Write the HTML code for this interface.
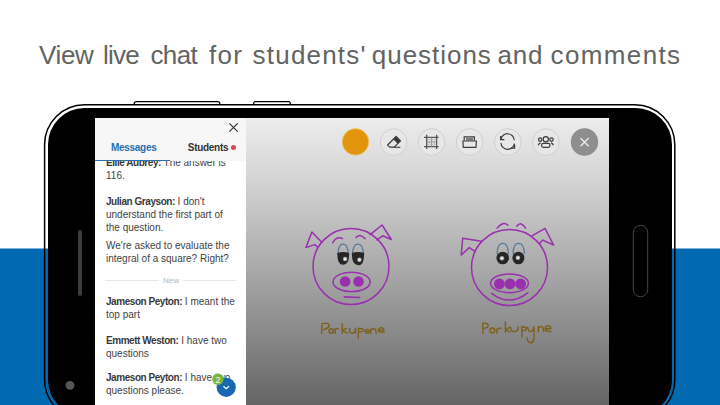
<!DOCTYPE html>
<html><head><meta charset="utf-8">
<style>
*{margin:0;padding:0;box-sizing:border-box}
html,body{width:720px;height:405px;overflow:hidden;background:#fff;font-family:"Liberation Sans",sans-serif}
.abs{position:absolute}
#band{left:0;top:248.5px;width:720px;height:157px;background:#0169b0}
#title{left:0;top:39.6px;width:720px;height:40px;font-size:26px;color:#636363;white-space:nowrap}
#title span{position:absolute;top:0;line-height:normal}
#screen{left:95px;top:118px;width:514px;height:300px;overflow:hidden}
#chat{left:0;top:0;width:151px;height:300px;background:#fff;overflow:hidden}
#hdr{left:0;top:0;width:151px;height:43px;background:#f7f7f7}
#canvas{left:151px;top:0;width:363px;height:300px;background:linear-gradient(#f6f6f6 0px,#ececec 1.5px,#d4d4d4 62px,#9a9a9a 182px,#6c6c6c 272px,#5e5e5e 300px)}
.msg{position:absolute;left:11px;font-size:10px;line-height:13px;color:#434343;white-space:nowrap}
.msg b{color:#3a3a3a;letter-spacing:-0.45px;word-spacing:0}
</style></head><body>
<div id="band" class="abs"></div>
<div id="title" class="abs"><span style="left:39.0px;letter-spacing:-0.37px">View</span><span style="left:103.1px;letter-spacing:-0.83px">live</span><span style="left:150.4px;letter-spacing:-0.57px">chat</span><span style="left:208.9px;letter-spacing:1.30px">for</span><span style="left:252.6px;letter-spacing:1.20px">students'</span><span style="left:371.8px;letter-spacing:0.97px">questions</span><span style="left:497.4px;letter-spacing:0.80px">and</span><span style="left:550.6px;letter-spacing:1.36px">comments</span></div>
<svg class="abs" style="left:0;top:0" width="720" height="405" viewBox="0 0 720 405">
  <rect x="134.2" y="101.7" width="85.6" height="5" rx="2" fill="#fff" stroke="#000" stroke-width="1.2"/>
  <rect x="253.7" y="101.7" width="36.6" height="5" rx="2" fill="#fff" stroke="#000" stroke-width="1.2"/>
  <rect x="44.6" y="104.8" width="630.2" height="315" rx="40" fill="#fff"/>
  <rect x="0" y="248.5" width="720" height="157" fill="#0169b0"/>
  <rect x="44.6" y="104.8" width="630.2" height="315" rx="40" fill="none" stroke="#000" stroke-width="1.5"/>
  <rect x="48" y="108" width="624" height="308.4" rx="36.5" fill="#000"/>
  <rect x="78" y="230" width="4" height="66" rx="2" fill="#3c3c3c"/>
  <rect x="633.3" y="225.3" width="14.4" height="71.4" rx="7.2" fill="none" stroke="#474747" stroke-width="1"/>
  <circle cx="70" cy="385.3" r="4.4" fill="#555"/>
</svg>
<div id="screen" class="abs">
  <div id="canvas" class="abs"><svg class="abs" style="left:0;top:0" width="363" height="300" viewBox="246 118 363 300">
    <g id="toolbar">
      <circle cx="355.5" cy="141.9" r="13.3" fill="#e2950b" stroke="#f0c873" stroke-width="0.8"/>
      <g fill="#e7e7e7" stroke="#cdcdcd" stroke-width="0.9">
        <circle cx="393.6" cy="142" r="13.3"/>
        <circle cx="431.6" cy="142" r="13.3"/>
        <circle cx="469.7" cy="142" r="13.3"/>
        <circle cx="507.8" cy="142" r="13.3"/>
        <circle cx="545.9" cy="142" r="13.3"/>
      </g>
      <circle cx="584.5" cy="142" r="13.7" fill="#8e8e8e"/>
      <path d="M580.5 138 L588.7 146.2 M588.7 138 L580.5 146.2" stroke="#ececec" stroke-width="1.3" fill="none"/>
      <!-- eraser -->
      <path d="M387.6 145 L396.1 136.5 L400.5 140.9 L394.2 147.2 L389.8 147.2 Z" fill="none" stroke="#3a3a3a" stroke-width="1.2" stroke-linejoin="round"/>
      <path d="M393.3 139.3 L396.1 136.5 L400.5 140.9 L397.7 143.7 Z" fill="#3a3a3a"/>
      <path d="M394 147.3 L400.4 147.3" stroke="#3a3a3a" stroke-width="1.1"/>
      <!-- grid -->
      <path d="M426.7 134.8 V148.9 M436.6 134.8 V148.9 M424 137.4 H438.6 M424 146.6 H438.6" stroke="#555" stroke-width="1.3" fill="none"/>
      <path d="M431.6 137.4 V146.6 M426.7 142 H436.6" stroke="#888" stroke-width="0.8" fill="none"/>
      <path d="M429.2 137.4 V146.6 M434.1 137.4 V146.6 M426.7 139.7 H436.6 M426.7 144.3 H436.6" stroke="#9a9a9a" stroke-width="0.7" stroke-dasharray="0.9 0.9" fill="none"/>
      <!-- tray -->
      <path d="M464.2 140.8 V136.8 H474.4 V140.8" fill="none" stroke="#3c3c3c" stroke-width="1.2"/>
      <rect x="466" y="138" width="7" height="2.6" fill="#7a7a7a"/>
      <path d="M462.9 141 H476.4 L476 147.4 H463.3 Z" fill="none" stroke="#3c3c3c" stroke-width="1.2" stroke-linejoin="round"/>
      <!-- sync -->
      <path d="M500.8 139.4 A6.8 6.8 0 0 1 514.3 140.2" fill="none" stroke="#3a3a3a" stroke-width="1.2"/>
      <path d="M500.6 135.9 V139.7 H504.3" fill="none" stroke="#3a3a3a" stroke-width="1.2"/>
      <path d="M514.4 143.6 A6.8 6.8 0 0 1 500.9 143" fill="none" stroke="#3a3a3a" stroke-width="1.2"/>
      <path d="M514.6 144.4 V148.1 H511" fill="none" stroke="#3a3a3a" stroke-width="1.2"/>
      <!-- group -->
      <g fill="none" stroke="#3a3a3a" stroke-width="1.2">
        <circle cx="545.8" cy="139.3" r="2.6"/>
        <circle cx="540.2" cy="139.6" r="1.7"/>
        <circle cx="551.5" cy="139.6" r="1.7"/>
        <rect x="541.6" y="143.3" width="8.4" height="4" rx="1.8"/>
        <path d="M538.2 145.3 Q538.8 143.4 540.6 142.9 M553.4 145.3 Q552.8 143.4 551 142.9"/>
      </g>
    </g>
    <g fill="none" stroke="#7e5f1b" stroke-width="1.4" stroke-linecap="round" stroke-linejoin="round">
      <!-- Porkupene -->
      <path d="M321.6 333.4 L322.2 323.6 Q326 322.3 329 324.4 Q330.3 327.6 323.8 329.6"/>
      <circle cx="331.2" cy="331" r="2.2"/>
      <path d="M335.3 333.3 V328.9 Q336.5 328.2 338.4 328.6"/>
      <path d="M342.2 323.6 V333.3 M346.2 328.3 L342.6 330.5 L347.5 333.1"/>
      <path d="M349.6 328.4 Q349.2 333.6 352.5 333.2 Q355.3 332.6 355.4 328.4 V333.2"/>
      <path d="M358.3 328 V338.3 M358.4 329 Q363.8 327.6 363.4 330.5 Q362.5 332.3 358.6 331.6"/>
      <path d="M365.2 331.4 H369.3 Q369 329.2 367.2 329.4 Q364.9 329.8 365.2 332 Q366 333.7 369.4 333.1"/>
      <path d="M370.8 333.3 V328.9 M370.9 330 Q372.5 328.5 374.5 328.9 Q376 329.5 376.2 333.3"/>
      <path d="M378.3 330.4 H383.8 Q383.8 327.6 381 327.7 Q378 328 378.3 330.8 Q378.9 332.6 384.3 332"/>
      <!-- Porkupyne -->
      <path d="M482.9 333.4 L482.8 323.2 Q487.8 322.6 488.2 325.2 Q488 328 483.6 328.4"/>
      <circle cx="492.4" cy="330.4" r="2.4"/>
      <path d="M496.9 333.2 V329.2 Q498.5 328 501 328.3"/>
      <path d="M505.4 322 V332.2 M509.9 327.2 L505.8 329.8 L510.2 332.1"/>
      <path d="M510.8 327.5 Q511 332 514.3 331.6 Q518.4 331.2 518.3 327"/>
      <path d="M521.8 326.5 V337.1 M521.9 327.3 Q526.4 326.4 526.3 328.8 Q525.9 330.9 522.2 330.6"/>
      <path d="M527.7 327.1 Q528.3 331.8 530.6 331.6 Q533.4 331.2 534 326.7 V339 Q533 343 530.3 342.7 Q527.3 342 527.2 338"/>
      <path d="M538.4 326.4 V331.9 M538.6 328 Q540 326 541.8 326.6 Q543.6 327.6 543.7 331.6"/>
      <path d="M545.3 328.7 H551 Q550.8 325.6 548 325.8 Q545 326.2 545.2 329 Q545.8 331.8 551.2 331.6"/>
    </g>
    <g id="pig1" fill="none" stroke="#9a2fb0" stroke-width="1.5" stroke-linecap="round" stroke-linejoin="round">
      <circle cx="351" cy="266.5" r="38"/>
      <path d="M321.5 242 L311.9 232 L305.9 247.6 L314.8 244.6 L317.8 247.2"/>
      <path d="M370.2 234.7 L382 225 L391.3 239.5 L382.8 235.8 L376.9 239.9"/>
      <path d="M332.7 242.8 Q336.6 235.6 342.5 238.6"/>
      <path d="M356.1 237.6 Q360.4 233.2 365 238.6"/>
      <ellipse cx="351.6" cy="281.9" rx="18.6" ry="9.7"/>
      <path d="M344.3 296.9 L359.7 297.5" stroke-width="1.6"/>
      <circle cx="345.1" cy="281.5" r="5.3" fill="#9a2fb0" stroke="none"/>
      <circle cx="358.5" cy="281.5" r="5.3" fill="#9a2fb0" stroke="none"/>
      <path d="M337.9 254.5 Q338.5 243.5 343 244.2 Q347.8 244 348.4 254.5 M352.5 254.5 Q353 243.5 358 244.2 Q363 244 363.5 254.5" stroke="#54789a" stroke-width="1.25"/>
      <path d="M337.4 253 Q343 251 349.1 253 Q349.5 265 343 264.8 Q337 264.5 337.4 253 Z" fill="#262626" stroke="none"/>
      <path d="M351.9 253 Q358 251 364.1 253 Q364.5 265.3 358 265.3 Q351.5 265 351.9 253 Z" fill="#262626" stroke="none"/>
      <circle cx="345.1" cy="259" r="2.2" fill="#aaa" stroke="none"/><circle cx="345.1" cy="259" r="1.2" fill="#eee" stroke="none"/>
      <circle cx="359.4" cy="259.7" r="2.2" fill="#aaa" stroke="none"/><circle cx="359.4" cy="259.7" r="1.2" fill="#eee" stroke="none"/>
    </g>
    <g id="pig2" fill="none" stroke="#9a2fb0" stroke-width="1.5" stroke-linecap="round" stroke-linejoin="round">
      <circle cx="509.5" cy="267.5" r="38"/>
      <path d="M481.2 241.3 L462.7 238.3 L461.2 255 L469.3 247.6 L475.3 251.6"/>
      <path d="M532.4 235.7 L545 228.3 L553.6 245 L542.8 240.1 L539.9 243.1"/>
      <path d="M497.1 228.1 Q503 220.8 507.8 225.1"/>
      <path d="M516.7 226.3 Q521.2 220.6 525.6 228.1"/>
      <ellipse cx="509.5" cy="283.3" rx="18.9" ry="9.4"/>
      <path d="M491.7 293.3 Q509.4 307 527.8 292.8" stroke-width="1.6"/>
      <circle cx="499.4" cy="283.9" r="5.4" fill="#9a2fb0" stroke="none"/>
      <circle cx="510" cy="283.9" r="5.4" fill="#9a2fb0" stroke="none"/>
      <circle cx="520.6" cy="283.9" r="5.4" fill="#9a2fb0" stroke="none"/>
      <path d="M497.1 253.6 Q497.5 243 503 243.5 Q508 243.3 508.4 253.6 M513.1 253.6 Q513.5 243 518.5 243.5 Q524 243.3 524.4 253.6" stroke="#54789a" stroke-width="1.25"/>
      <ellipse cx="502.7" cy="258" rx="6.3" ry="6.3" fill="#262626" stroke="none"/>
      <ellipse cx="518.4" cy="258" rx="6" ry="6.3" fill="#262626" stroke="none"/>
      <circle cx="501.9" cy="258.3" r="2.3" fill="#aaa" stroke="none"/><circle cx="501.9" cy="258.3" r="1.2" fill="#eee" stroke="none"/>
      <circle cx="517.9" cy="257.7" r="2.3" fill="#aaa" stroke="none"/><circle cx="517.9" cy="257.7" r="1.2" fill="#eee" stroke="none"/>
    </g>
  </svg></div>
  <div id="chat" class="abs">
    <div class="msg" style="top:38px"><b>Ellie Aubrey:</b> The answer is<br>116.</div>
    <div class="msg" style="top:77px"><b>Julian Grayson:</b> I don't<br>understand the first part of<br>the question.</div>
    <div class="msg" style="top:121px">We're asked to evaluate the<br>integral of a square? Right?</div>
    <div class="msg" style="top:177px"><b>Jameson Peyton:</b> I meant the<br>top part</div>
    <div class="msg" style="top:215.6px"><b>Emmett Weston:</b> I have two<br>questions</div>
    <div class="msg" style="top:252.8px"><b>Jameson Peyton:</b> I have two<br>questions please.</div>
    <div id="hdr" class="abs">
      <div class="abs" style="left:16px;top:23px;font-size:10px;font-weight:bold;color:#2a6fae;letter-spacing:-0.3px;line-height:13px">Messages</div>
      <div class="abs" style="left:92.8px;top:23px;font-size:10px;font-weight:bold;color:#333;letter-spacing:-0.3px;line-height:13px">Students</div>
      <div class="abs" style="left:135.8px;top:27px;width:5px;height:5px;border-radius:50%;background:#e04848"></div>
      <svg class="abs" style="left:0;top:0" width="151" height="42"><path d="M134.3 5.3 L142.7 13.7 M142.7 5.3 L134.3 13.7" stroke="#333" stroke-width="1.2"/></svg>
      <div class="abs" style="left:0;top:41.8px;width:75px;height:1.2px;background:#2a6fae"></div>
    </div>
    <div class="abs" style="left:10px;top:161.5px;width:131px;height:1px;background:#e8e8e8"></div>
    <div class="abs" style="left:64px;top:157px;width:24px;height:11px;background:#fff;font-size:8px;color:#b8b8b8;text-align:center;line-height:11px">New</div>
    <svg class="abs" style="left:0;top:0" width="151" height="300">
      <circle cx="131.2" cy="269.3" r="9.6" fill="#1768b0"/>
      <path d="M128.4 268.3 L131.2 270.7 L134 268.3" fill="none" stroke="#fff" stroke-width="1.2"/>
      <circle cx="122.9" cy="261.3" r="5.7" fill="#7cb342"/>
      <text x="122.9" y="264.6" font-size="9" fill="#f4f8ee" text-anchor="middle" font-family="Liberation Sans">2</text>
    </svg>
  </div>
</div>
</body></html>
